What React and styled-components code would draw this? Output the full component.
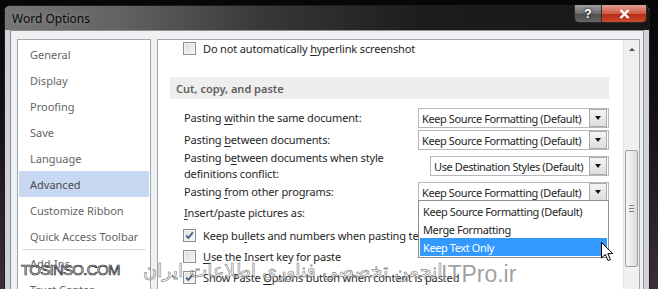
import React from "react";
import styled, { createGlobalStyle } from "styled-components";

const GlobalStyle = createGlobalStyle`
    html, body {
        margin: 0;
        padding: 0;
        background: #0c0b0c;
    }
`;

const uiFont = `"Noto Sans", "Open Sans", sans-serif`;

const navItems = [
    "General",
    "Display",
    "Proofing",
    "Save",
    "Language",
    "Advanced",
    "Customize Ribbon",
    "Quick Access Toolbar",
];

const pasteChoices = [
    "Keep Source Formatting (Default)",
    "Merge Formatting",
    "Keep Text Only",
];

function App() {
    return (
        <Screen>
            <GlobalStyle />
            <Window>
                <TitleBar>
                    <Title>Word Options</Title>
                    <Caption>
                        <HelpBtn>?</HelpBtn>
                        <CloseBtn>
                            <svg width="11" height="10" viewBox="0 0 11 10">
                                <path d="M1.5 1 L9.5 9 M9.5 1 L1.5 9" stroke="#fff" strokeWidth="2.4" />
                            </svg>
                        </CloseBtn>
                    </Caption>
                </TitleBar>
                <Frame>
                    <Client>
                        <Nav>
                            {navItems.map(function (a, i) {
                                return (
                                    <NavItem key={i} active={a === "Advanced"}>
                                        {a}
                                    </NavItem>
                                );
                            })}
                            <NavRule />
                            <NavItem>Add-Ins</NavItem>
                            <NavItem>Trust Center</NavItem>
                        </Nav>
                        <Panel>
                            <Scroll>
                                <CheckRow height={16}>
                                    <Check />
                                    <span>
                                        Do not automatically <u>h</u>yperlink screenshot
                                    </span>
                                </CheckRow>
                                <SectionHead>Cut, copy, and paste</SectionHead>
                                <Row top={9}>
                                    <Label>
                                        Pasting <u>w</u>ithin the same document:
                                    </Label>
                                    <Select value="Keep Source Formatting (Default)" />
                                </Row>
                                <Row top={2}>
                                    <Label>
                                        Pasting <u>b</u>etween documents:
                                    </Label>
                                    <Select value="Keep Source Formatting (Default)" />
                                </Row>
                                <Row height={32}>
                                    <Label>
                                        Pasting b<u>e</u>tween documents when style
                                        <br />
                                        definitions conflict:
                                    </Label>
                                    <Select value="Use Destination Styles (Default)" width={179} />
                                </Row>
                                <Row>
                                    <Label>
                                        Pasting <u>f</u>rom other programs:
                                    </Label>
                                    <Select value="Keep Source Formatting (Default)" open />
                                </Row>
                                <Row top={1}>
                                    <Label>
                                        <u>I</u>nsert/paste pictures as:
                                    </Label>
                                </Row>
                                <CheckRow top={2}>
                                    <Check checked />
                                    <span>
                                        Keep bu<u>l</u>lets and numbers when pasting text with Paste Text Only option
                                    </span>
                                </CheckRow>
                                <CheckRow>
                                    <Check />
                                    <span>
                                        <u>U</u>se the Insert key for paste
                                    </span>
                                </CheckRow>
                                <CheckRow>
                                    <Check checked />
                                    <span>
                                        Show Paste <u>O</u>ptions button when content is pasted
                                    </span>
                                </CheckRow>
                            </Scroll>
                            <ScrollBar>
                                <ScrollArrow />
                                <Thumb>
                                    <Grip />
                                    <Grip />
                                    <Grip />
                                </Thumb>
                            </ScrollBar>
                        </Panel>
                    </Client>
                </Frame>
            </Window>
            <Cursor>
                <svg width="13" height="20" viewBox="0 0 13 20">
                    <path
                        d="M0.5 0.5 L0.5 16 L4.3 12.4 L7 18.6 L9.4 17.6 L6.8 11.6 L11.8 11.6 Z"
                        fill="#fff"
                        stroke="#000"
                        strokeWidth="1"
                        strokeLinejoin="round"
                    />
                </svg>
            </Cursor>
            <MarkLatin>TOSINSO.COM</MarkLatin>
            <MarkPersian dir="rtl">انجمن تخصصی فناوری اطلاعات ایران</MarkPersian>
            <MarkSite>ITPro.ir</MarkSite>
        </Screen>
    );
}

function Check(props) {
    return (
        <CheckBox>
            {props.checked && (
                <svg width="11" height="11" viewBox="0 0 11 11">
                    <path
                        d="M2.2 5.6 L4.4 8 L8.8 2.4"
                        fill="none"
                        stroke="#44567d"
                        strokeWidth="1.7"
                    />
                </svg>
            )}
        </CheckBox>
    );
}

function Select(props) {
    return (
        <SelectBox width={props.width}>
            <SelectText>{props.value}</SelectText>
            <SelectBtn>
                <DownArrow />
            </SelectBtn>
            {props.open && (
                <DropList>
                    {pasteChoices.map(function (a, i) {
                        return (
                            <DropItem key={i} hot={a === "Keep Text Only"}>
                                {a}
                            </DropItem>
                        );
                    })}
                </DropList>
            )}
        </SelectBox>
    );
}

const Screen = styled.div`
    position: relative;
    width: 658px;
    height: 289px;
    overflow: hidden;
    padding: 5px 0 0 4px;
    box-sizing: border-box;
    background: linear-gradient(
        to bottom,
        #070707 0%,
        #141013 40%,
        #2c2128 75%,
        #3d2e38 100%
    );
    font-family: ${uiFont};
`;

const Window = styled.div`
    width: 644px;
    display: flex;
    flex-direction: column;
    border: 1px solid #1c1c1c;
    border-bottom: none;
    border-radius: 6px 6px 0 0;
    background: #cfd2d6;
`;

const TitleBar = styled.div`
    height: 24px;
    display: flex;
    justify-content: space-between;
    align-items: flex-start;
    border-radius: 5px 5px 0 0;
    background: linear-gradient(
        to right,
        #767676 0%,
        #626262 18%,
        #383838 40%,
        #1c1c1c 65%,
        #181818 100%
    );
`;

const Title = styled.div`
    padding: 4px 0 0 7px;
    font-size: 12px;
    color: #0a0a0a;
    text-shadow: 0 0 7px rgba(255, 255, 255, 0.3);
`;

const Caption = styled.div`
    display: flex;
    margin-right: 2px;
    margin-top: -1px;
`;

const CaptionBtn = styled.div`
    height: 17px;
    display: flex;
    align-items: center;
    justify-content: center;
    border: 1px solid #2a2a2a;
    border-top: none;
    color: #fff;
    font-weight: 700;
    font-size: 12px;
    font-family: "Liberation Sans", sans-serif;
`;

const HelpBtn = styled(CaptionBtn)`
    width: 26px;
    border-radius: 0 0 0 5px;
    background: linear-gradient(to bottom, #a0a0a0, #6b6b6b 50%, #4c4c4c 51%, #666 100%);
    text-shadow: 0 0 3px #000;
`;

const CloseBtn = styled(CaptionBtn)`
    width: 44px;
    border-left: none;
    border-radius: 0 0 5px 0;
    background: linear-gradient(to bottom, #e2a090, #cf5a45 50%, #b42a14 51%, #c84a30 100%);
`;

const Frame = styled.div`
    padding: 0 5px 0 5px;
`;

const Client = styled.div`
    display: flex;
    gap: 6px;
    height: 260px;
    padding: 8px 3px 0 6px;
    border: 1px solid #8d9094;
    border-bottom: none;
    background: #eef0f2;
`;

const Nav = styled.div`
    width: 132px;
    flex-shrink: 0;
    padding-top: 1px;
    border: 1px solid #a3a6aa;
    border-bottom: none;
    background: #fff;
`;

const NavItem = styled.div`
    height: 26px;
    margin: 0 1px;
    padding-left: 11px;
    display: flex;
    align-items: center;
    font-size: 11px;
    white-space: nowrap;
    color: ${(props) => (props.active ? "#4a4a4a" : "#646464")};
    background: ${(props) => (props.active ? "#c8d8f2" : "transparent")};
`;

const NavRule = styled.div`
    height: 1px;
    margin: 0 4px 0 4px;
    background: #d6d6d6;
`;

const Panel = styled.div`
    flex: 1;
    display: flex;
    border: 1px solid #a3a6aa;
    border-bottom: none;
    background: #fff;
`;

const Scroll = styled.div`
    flex: 1;
    min-width: 0;
    padding: 0 14px 0 12px;
    font-size: 11px;
    letter-spacing: -0.15px;
    color: #262626;
    u {
        text-decoration-thickness: 1px;
        text-underline-offset: 2px;
    }
`;

const CheckRow = styled.div`
    height: ${(props) => props.height || 21}px;
    margin-top: ${(props) => props.top || 0}px;
    padding-left: 13px;
    display: flex;
    align-items: center;
    gap: 7px;
    white-space: nowrap;
`;

const CheckBox = styled.div`
    width: 11px;
    height: 11px;
    flex-shrink: 0;
    border: 1px solid #8e8f90;
    background: linear-gradient(135deg, #dcdcdc, #f7f7f7);
    box-shadow: inset 0 0 0 1px #f4f4f4;
    display: flex;
`;

const SectionHead = styled.div`
    height: 22px;
    margin-top: 21px;
    padding-left: 6px;
    display: flex;
    align-items: center;
    background: #eeeeee;
    color: #5e5e5e;
    font-weight: 600;
    font-size: 11px;
    letter-spacing: 0;
`;

const Row = styled.div`
    height: ${(props) => props.height || 20}px;
    margin-top: ${(props) => props.top || 0}px;
    padding-left: 14px;
    display: flex;
    align-items: center;
    justify-content: space-between;
`;

const Label = styled.div`
    line-height: 16px;
`;

const SelectBox = styled.div`
    position: relative;
    width: ${(props) => props.width || 191}px;
    height: 20px;
    flex-shrink: 0;
    box-sizing: border-box;
    display: flex;
    align-items: center;
    border: 1px solid #b6b8bb;
    background: #fff;
    letter-spacing: -0.4px;
`;

const SelectText = styled.div`
    flex: 1;
    min-width: 0;
    overflow: hidden;
    padding-left: 3px;
    white-space: nowrap;
    color: #262626;
`;

const SelectBtn = styled.div`
    width: 16px;
    height: 16px;
    flex-shrink: 0;
    margin-right: 1px;
    display: flex;
    align-items: center;
    justify-content: center;
    border: 1px solid #a9abae;
    background: linear-gradient(to bottom, #f4f4f4, #dedede);
`;

const DownArrow = styled.span`
    width: 0;
    height: 0;
    border-left: 3.5px solid transparent;
    border-right: 3.5px solid transparent;
    border-top: 4px solid #111;
`;

const DropList = styled.div`
    position: absolute;
    top: calc(100% - 1px);
    left: -1px;
    width: 191px;
    box-sizing: border-box;
    padding: 1px;
    border: 1px solid #8b8d90;
    background: #fff;
    z-index: 2;
`;

const DropItem = styled.div`
    height: 18px;
    padding-left: 3px;
    display: flex;
    align-items: center;
    white-space: nowrap;
    color: ${(props) => (props.hot ? "#fff" : "#262626")};
    background: ${(props) => (props.hot ? "#3399ff" : "transparent")};
`;

const ScrollBar = styled.div`
    width: 15px;
    flex-shrink: 0;
    display: flex;
    flex-direction: column;
    align-items: center;
    background: #f0f0f0;
    border-left: 1px solid #e6e6e6;
`;

const ScrollArrow = styled.div`
    margin-top: 8px;
    width: 0;
    height: 0;
    border-left: 3px solid transparent;
    border-right: 3px solid transparent;
    border-bottom: 3px solid #4c4c4c;
`;

const Thumb = styled.div`
    width: 11px;
    height: 115px;
    margin-top: 99px;
    display: flex;
    flex-direction: column;
    align-items: center;
    justify-content: center;
    gap: 2px;
    border: 1px solid #9b9d9f;
    border-radius: 2px;
    background: linear-gradient(to right, #f7f7f7, #e7e7e7 60%, #dadada);
`;

const Grip = styled.div`
    width: 5px;
    height: 1px;
    background: #7d7f82;
`;

const Cursor = styled.div`
    position: absolute;
    left: 601px;
    top: 242px;
    width: 13px;
    height: 20px;
    z-index: 5;
`;

const Mark = styled.div`
    position: absolute;
    z-index: 4;
    white-space: nowrap;
`;

const MarkLatin = styled(Mark)`
    left: 21px;
    top: 261px;
    font-family: "Liberation Sans", sans-serif;
    font-size: 15px;
    letter-spacing: -0.7px;
    color: #fff;
    -webkit-text-stroke: 0.7px #1a1a1a;
`;

const MarkPersian = styled(Mark)`
    left: 143px;
    top: 259px;
    font-family: "DejaVu Sans", sans-serif;
    font-size: 19px;
    color: rgba(255, 255, 255, 0.55);
    -webkit-text-stroke: 0.6px rgba(70, 70, 70, 0.75);
`;

const MarkSite = styled(Mark)`
    left: 441px;
    top: 261px;
    font-family: "Liberation Sans", sans-serif;
    font-size: 23px;
    color: rgba(130, 130, 130, 0.75);
    text-shadow: 0 0 2px rgba(255, 255, 255, 0.8);
`;

export default App;
